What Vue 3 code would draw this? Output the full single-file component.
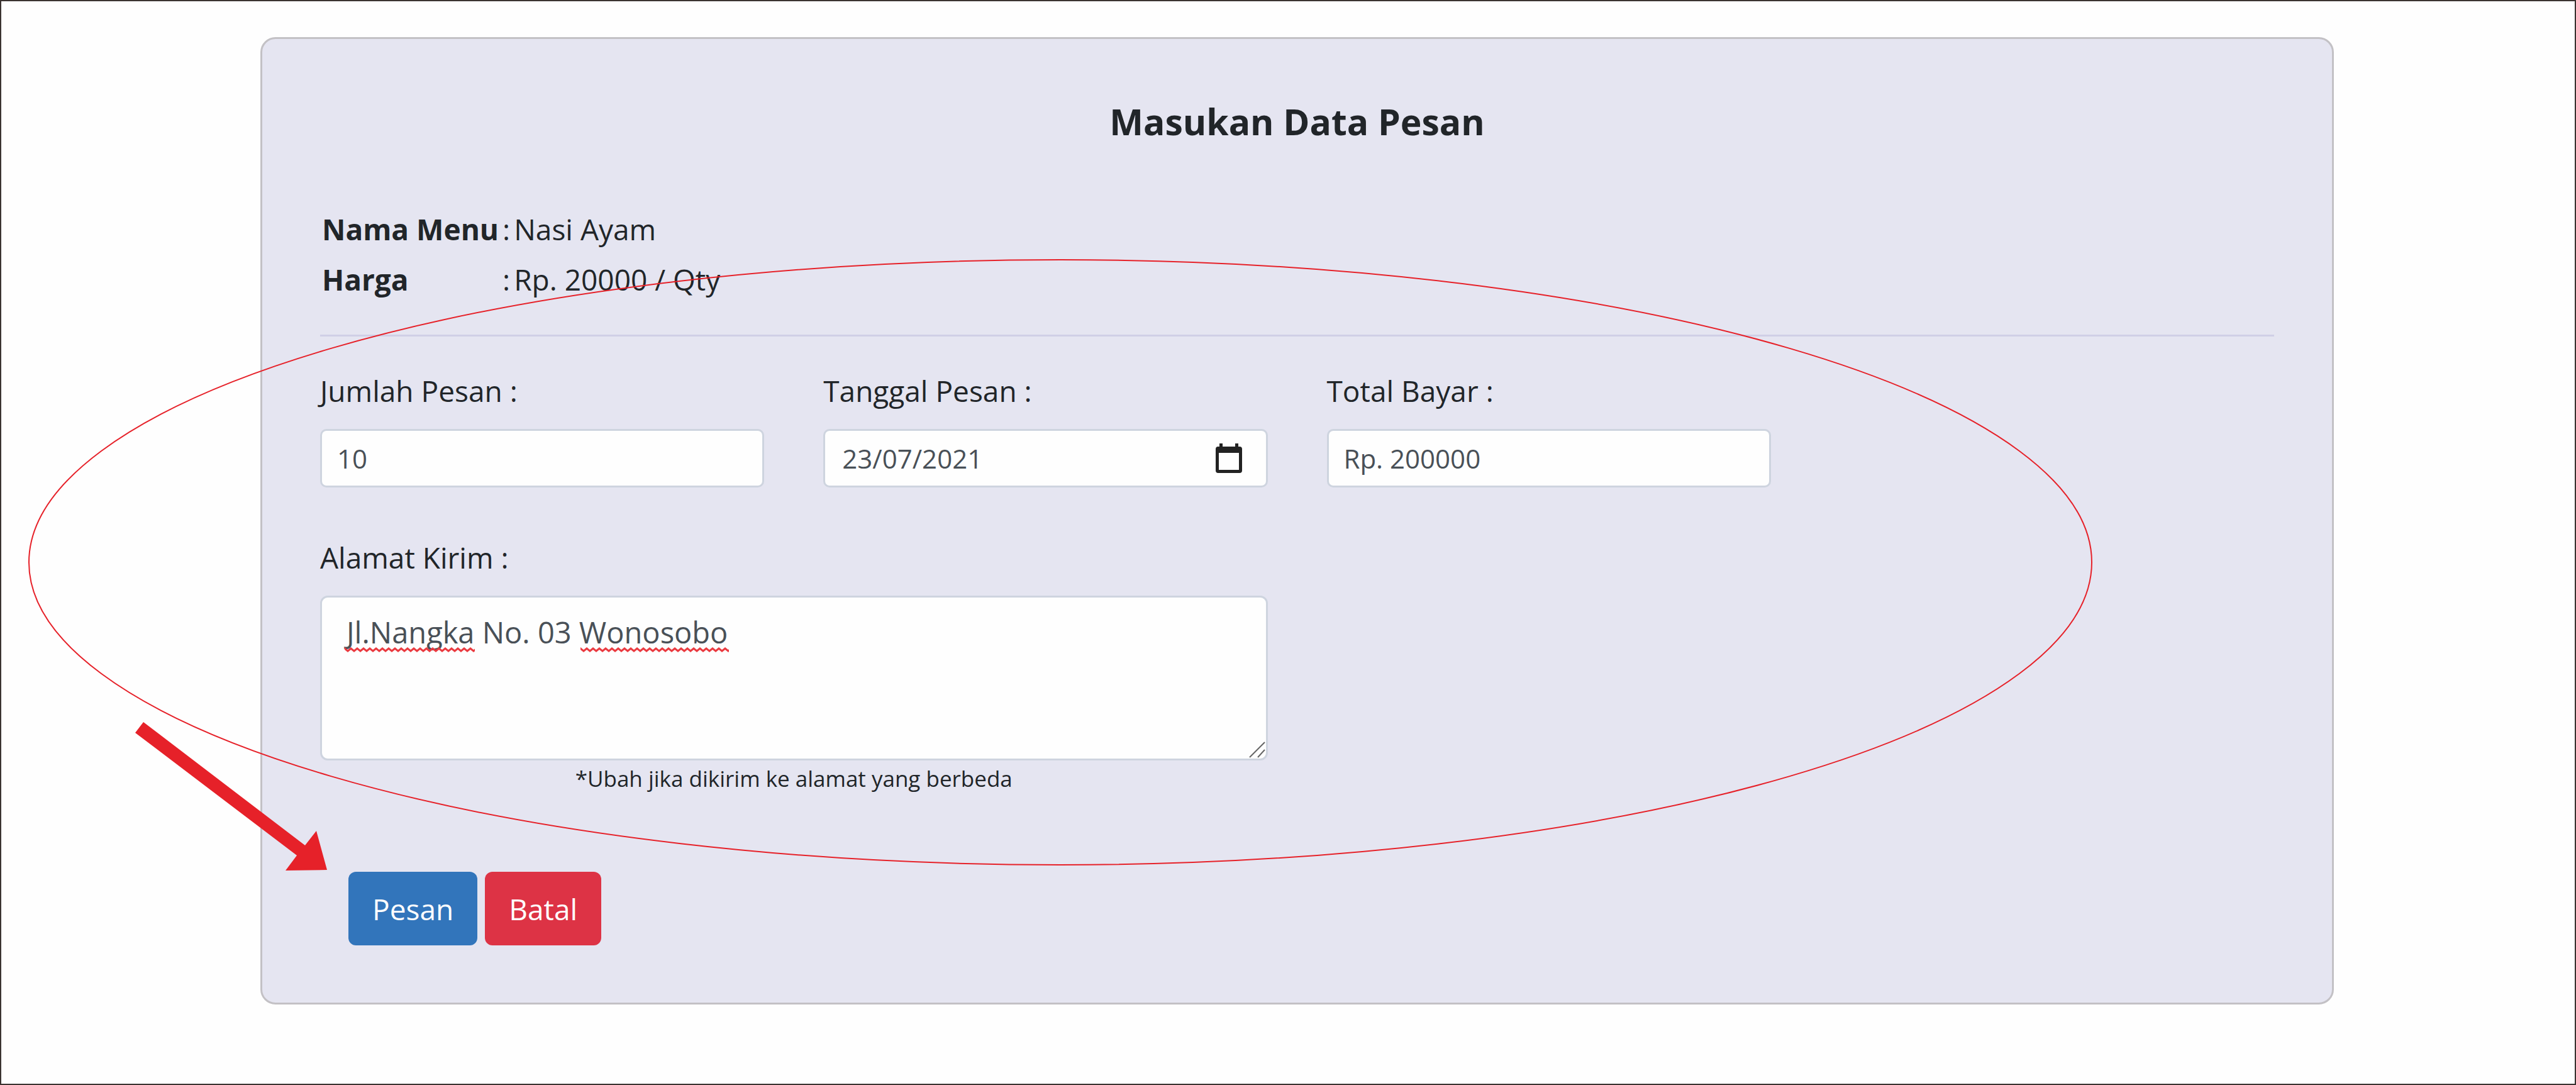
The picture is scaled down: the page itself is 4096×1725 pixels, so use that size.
<script setup>
import { ref } from 'vue'

const quantity = ref('10')
const orderDate = ref('23/07/2021')
const total = ref('Rp. 200000')
const address = ref('Jl.Nangka No. 03 Wonosobo')
</script>

<template>
  <main class="page">
    <form class="card" @submit.prevent>
      <h1 class="title">Masukan Data Pesan</h1>

      <table class="summary">
        <tbody>
          <tr>
            <th scope="row">Nama Menu</th>
            <td>:</td>
            <td>Nasi Ayam</td>
          </tr>
          <tr>
            <th scope="row">Harga</th>
            <td>:</td>
            <td>Rp. 20000 / Qty</td>
          </tr>
        </tbody>
      </table>

      <hr class="rule" />

      <div class="fields">
        <div class="field">
          <label for="quantity">Jumlah Pesan :</label>
          <input id="quantity" v-model="quantity" class="control" type="text" inputmode="numeric" />
        </div>
        <div class="field">
          <label for="date">Tanggal Pesan :</label>
          <div class="control date">
            <input id="date" v-model="orderDate" type="text" />
            <button type="button" class="picker" aria-label="Pilih tanggal">
              <svg viewBox="0 0 42 48" width="42" height="48" aria-hidden="true">
                <path
                  fill="#222"
                  fill-rule="evenodd"
                  d="M6 5V0h5v5h20V0h5v5h2q4 0 4 4v34q0 4-4 4H4q-4 0-4-4V9q0-4 4-4zM5 15v27h32V15z"
                />
              </svg>
            </button>
          </div>
        </div>
        <div class="field">
          <label for="total">Total Bayar :</label>
          <input id="total" v-model="total" class="control" type="text" />
        </div>
        <div class="field wide">
          <label for="address">Alamat Kirim :</label>
          <div class="area">
            <textarea id="address" v-model="address" spellcheck="false"></textarea>
            <svg class="squiggle first" aria-hidden="true">
              <defs>
                <pattern id="wave" width="10" height="8" patternUnits="userSpaceOnUse">
                  <path d="M-3 -1 0 2 5 6 10 2 13 -1" fill="none" stroke="#ea3a40" stroke-width="3" />
                </pattern>
              </defs>
              <rect width="100%" height="8" fill="url(#wave)" />
            </svg>
            <svg class="squiggle second" aria-hidden="true">
              <rect width="100%" height="8" fill="url(#wave)" />
            </svg>
            <svg class="grip" viewBox="0 0 26 26" width="26" height="26" aria-hidden="true">
              <path d="M1 25 25 1M14 25 25 13" stroke="#666" stroke-width="2" />
            </svg>
          </div>
          <small class="hint">*Ubah jika dikirim ke alamat yang berbeda</small>
        </div>
      </div>

      <div class="actions">
        <button type="submit" class="btn primary">Pesan</button>
        <button type="button" class="btn danger">Batal</button>
      </div>
    </form>

    <svg class="marks" viewBox="0 0 4096 1725" preserveAspectRatio="none" aria-hidden="true">
      <ellipse cx="1686" cy="894" rx="1640" ry="481" fill="none" stroke="#e62129" stroke-width="2" />
      <path fill="#e62129" d="M228 1148 215 1165 472 1360 454 1384 520 1383 503 1321 485 1344z" />
    </svg>
  </main>
</template>

<style>
body {
  margin: 0;
}
</style>

<style scoped>
*,
*::before,
*::after {
  box-sizing: border-box;
}

.page {
  position: relative;
  min-height: 100vh;
  padding: 57px 383px 57px 412px;
  border: 2px solid #3b3331;
  background: #fefefe;
  color: #212529;
  font-family: "Open Sans", "Noto Sans", sans-serif;
  font-size: 46px;
  line-height: 72px;
}

.card {
  padding: 91px 92px;
  border: 3px solid #c3c1c5;
  border-radius: 24px;
  background: #e5e5f1;
}

.title {
  margin: 0 0 91px;
  font-size: 57px;
  font-weight: 700;
  line-height: 80px;
  text-align: center;
}

.summary {
  border-collapse: collapse;
  line-height: 80px;
}

.summary th,
.summary td {
  padding: 0 3px;
  font-weight: 400;
  text-align: left;
}

.summary th {
  font-weight: 700;
}

.rule {
  height: 3px;
  margin: 48px 0 50px;
  border: 0;
  background: #d0cfe6;
}

.fields {
  display: grid;
  grid-template-columns: repeat(4, 1fr);
  gap: 75px 94px;
}

.field {
  display: flex;
  flex-direction: column;
  min-width: 0;
}

.field.wide {
  grid-column: 1 / span 2;
}

label {
  align-self: flex-start;
  margin-bottom: 25px;
}

.control {
  width: 100%;
  height: 93px;
  padding: 0 24px;
  border: 3px solid #ced4df;
  border-radius: 10px;
  background: #fefefe;
  color: #495057;
  font-family: inherit;
  font-size: 42px;
}

.date {
  display: flex;
  align-items: center;
  padding-right: 38px;
}

.date input {
  flex: 1;
  min-width: 0;
  padding: 0 3px;
  border: 0;
  background: none;
  color: inherit;
  font: inherit;
}

.picker {
  display: flex;
  padding: 0;
  border: 0;
  background: none;
}

.area {
  position: relative;
  display: flex;
}

textarea {
  flex: 1;
  height: 262px;
  padding: 19px 39px;
  border: 3px solid #ced4df;
  border-radius: 12px;
  background: #fefefe;
  color: #495057;
  font-family: inherit;
  font-size: 47px;
  line-height: 72px;
  resize: none;
}

.squiggle {
  position: absolute;
  top: 82px;
  height: 8px;
}

.first {
  left: 39px;
  width: 207px;
}

.second {
  left: 414px;
  width: 236px;
}

.grip {
  position: absolute;
  right: 4px;
  bottom: 4px;
}

.hint {
  font-size: 35px;
  line-height: 58px;
  text-align: center;
}

.actions {
  display: flex;
  gap: 12px;
  margin: 119px 0 0 45px;
}

.btn {
  height: 117px;
  padding: 0 38px;
  border: 0;
  border-radius: 12px;
  color: #fefefe;
  font: inherit;
}

.primary {
  background: #3275bb;
}

.danger {
  background: #dd3345;
}

.marks {
  position: absolute;
  top: -2px;
  left: -2px;
  width: calc(100% + 4px);
  height: calc(100% + 4px);
  pointer-events: none;
}
</style>
